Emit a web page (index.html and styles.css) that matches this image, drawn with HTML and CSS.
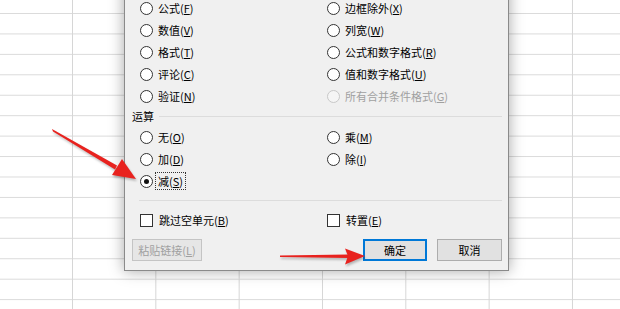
FILE: index.html
```html
<!DOCTYPE html>
<html lang="zh-CN">
<head>
    <meta charset="UTF-8">
    <title>选择性粘贴</title>
    <link rel="stylesheet" href="styles.css">
</head>
<body>
    <div class="sheet">
        <div class="dialog">
            <div class="options">
                <label class="radio"><span class="dot"></span>公式(<u>F</u>)</label>
                <label class="radio"><span class="dot"></span>边框除外(<u>X</u>)</label>
                <label class="radio"><span class="dot"></span>数值(<u>V</u>)</label>
                <label class="radio"><span class="dot"></span>列宽(<u>W</u>)</label>
                <label class="radio"><span class="dot"></span>格式(<u>T</u>)</label>
                <label class="radio"><span class="dot"></span>公式和数字格式(<u>R</u>)</label>
                <label class="radio"><span class="dot"></span>评论(<u>C</u>)</label>
                <label class="radio"><span class="dot"></span>值和数字格式(<u>U</u>)</label>
                <label class="radio"><span class="dot"></span>验证(<u>N</u>)</label>
                <label class="radio disabled"><span class="dot"></span>所有合并条件格式(<u>G</u>)</label>
            </div>

            <div class="group-title"><span>运算</span></div>
            <div class="options ops">
                <label class="radio"><span class="dot"></span>无(<u>O</u>)</label>
                <label class="radio"><span class="dot"></span>乘(<u>M</u>)</label>
                <label class="radio"><span class="dot"></span>加(<u>D</u>)</label>
                <label class="radio"><span class="dot"></span>除(<u>I</u>)</label>
                <label class="radio checked"><span class="dot"></span><span class="focus">减(<u>S</u>)</span></label>
            </div>

            <div class="divider"></div>
            <div class="options">
                <label class="check"><span class="box"></span>跳过空单元(<u>B</u>)</label>
                <label class="check"><span class="box"></span>转置(<u>E</u>)</label>
            </div>

            <div class="buttons">
                <button class="btn link" disabled>粘贴链接(<u>L</u>)</button>
                <div class="right">
                    <button class="btn primary">确定</button>
                    <button class="btn">取消</button>
                </div>
            </div>
        </div>

        <!-- 红色箭头标注 -->
        <svg class="marks" width="620" height="309" viewBox="0 0 620 309">
            <polygon points="52,129 117,165.5 115,169.5 53,131.5" fill="#e8221e"/>
            <polygon points="136,179 112,175 122,159" fill="#e8221e"/>
            <polygon points="280,255.5 348,254.5 348,258 280,257" fill="#e8221e"/>
            <polygon points="365,256 345,248.5 348,256 345,264.5" fill="#e8221e"/>
        </svg>
    </div>
</body>
</html>
```

FILE: styles.css
```css
body {
    margin: 0;
    font-family: "Noto Sans CJK SC", "Noto Sans", sans-serif;
    font-size: 11px;
    color: #000;
}

.sheet {
    position: relative;
    width: 620px;
    height: 309px;
    overflow: hidden;
    background-color: #fff;
    background-image:
        linear-gradient(to right, #d6d6d6 0, #d6d6d6 1px, transparent 1px),
        linear-gradient(to bottom, #dadada 0, #dadada 1px, transparent 1px);
    background-size: 83.33px 100%, 100% 20.45px;
    background-position: 72px 0, 0 13px;
}

.dialog {
    position: absolute;
    left: 124px;
    top: -16px;
    width: 362px;
    padding: 12px 6px 9px 15px;
    background: #f0f0f0;
    border: 1px solid #8a8a8a;
    box-shadow: 0 0 14px rgba(0, 0, 0, 0.35);
}

.options {
    display: grid;
    grid-template-columns: 187px 1fr;
}

.radio,
.check {
    display: flex;
    align-items: center;
    height: 22px;
    line-height: 12px;
    white-space: nowrap;
}

.dot {
    width: 11px;
    height: 11px;
    border: 1px solid #333;
    border-radius: 50%;
    background: #fff;
    margin-right: 5px;
    flex-shrink: 0;
    position: relative;
}

.checked .dot::after {
    content: "";
    position: absolute;
    left: 3px;
    top: 3px;
    width: 5px;
    height: 5px;
    border-radius: 50%;
    background: #111;
}

.disabled {
    color: #a0a0a0;
}

.disabled .dot {
    border-color: #c8c8c8;
    background: #f5f5f5;
}

.focus {
    outline: 1px dotted #333;
    outline-offset: 2px;
}

.group-title {
    display: flex;
    align-items: center;
    height: 18px;
    margin-left: -8px;
    margin-bottom: 1px;
}

.group-title::after {
    content: "";
    flex: 1;
    height: 1px;
    background: #dcdcdc;
    margin-left: 5px;
}

.divider {
    height: 1px;
    background: #dcdcdc;
    margin: 8px 0 8px -1px;
}

.box {
    width: 11px;
    height: 11px;
    border: 1px solid #333;
    background: #fff;
    margin-right: 6px;
    flex-shrink: 0;
}

.buttons {
    display: flex;
    justify-content: space-between;
    margin-top: 8px;
    margin-left: -8px;
}

.right {
    display: flex;
    gap: 10px;
}

.btn {
    font-family: inherit;
    font-size: 11px;
    height: 22px;
    padding: 0;
    background: #e1e1e1;
    border: 1px solid #adadad;
    color: #000;
    width: 65px;
    line-height: 18px;
}

.btn.link {
    width: 70px;
    color: #a0a0a0;
    background: #e6e6e6;
    border-color: #c4c4c4;
}

.btn.primary {
    width: 64px;
    border: 2px solid #0078d7;
}

.marks {
    position: absolute;
    left: 0;
    top: 0;
    filter: drop-shadow(1px 2px 1px rgba(0, 0, 0, 0.25));
}
```
